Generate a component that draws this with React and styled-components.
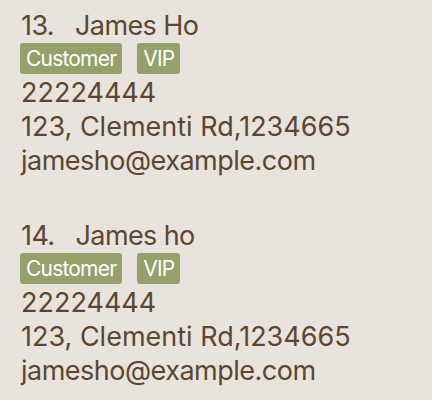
import React from "react";
import styled, { createGlobalStyle } from "styled-components";

const Global = createGlobalStyle`
  html, body { margin: 0; padding: 0; background: #e8e3dd; }
  body { font-family: Inter, "Noto Sans", sans-serif; }
`;

const List = styled.div`
  display: flex;
  flex-direction: column;
  padding: 9px 0 0 21px;
  gap: 41px;
`;

const Card = styled.div`
  display: flex;
  flex-direction: column;
  color: #5d4631;
  font-size: 27px;
  line-height: 34px;
  letter-spacing: -0.4px;
  white-space: nowrap;
`;

const NameRow = styled.div`
  display: flex;
  gap: 21px;
  letter-spacing: -0.6px;
`;

const Tags = styled.div`
  display: flex;
  gap: 15px;
  margin: 0 0 2px -1px;
`;

const Tag = styled.span`
  background: #95a06a;
  color: #fff;
  font-size: 21px;
  letter-spacing: -0.8px;
  line-height: 31px;
  padding: 0 6px;
  border-radius: 3px;
`;

const Line = styled.div`
  letter-spacing: ${(p) => (p.$numeric ? "0px" : "-0.5px")};
`;

const people = [
  { id: 13, name: "James Ho" },
  { id: 14, name: "James ho" },
];

export default function App() {
  return (
    <>
      <Global />
      <List>
        {people.map((p) => (
          <Card key={p.id}>
            <NameRow>
              <span>{p.id}.</span>
              <span>{p.name}</span>
            </NameRow>
            <Tags>
              <Tag>Customer</Tag>
              <Tag>VIP</Tag>
            </Tags>
            <Line $numeric>22224444</Line>
            <Line $numeric>123, Clementi Rd,1234665</Line>
            <Line>jamesho@example.com</Line>
          </Card>
        ))}
      </List>
    </>
  );
}
